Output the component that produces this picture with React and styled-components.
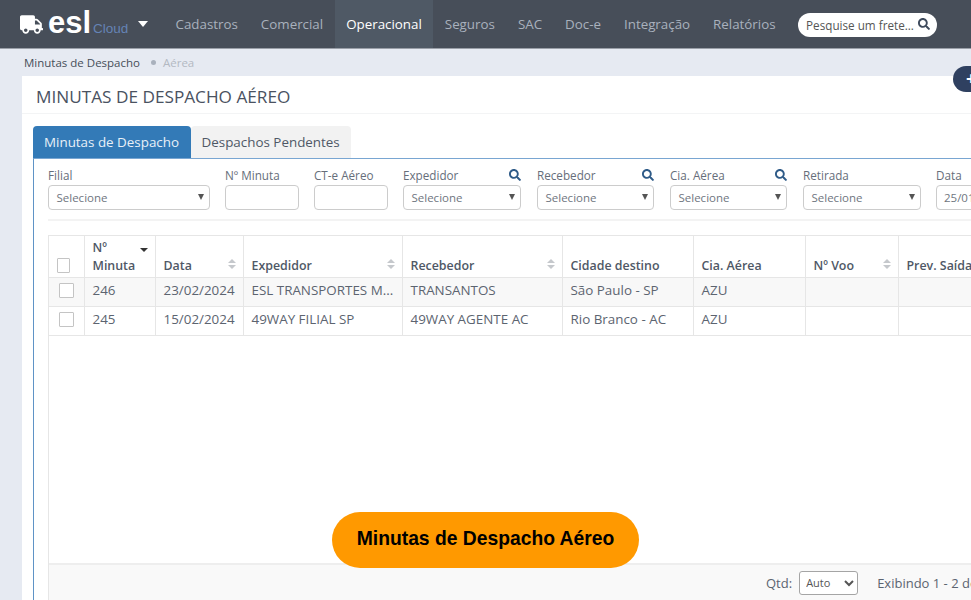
import styled, { createGlobalStyle } from "styled-components";
import { FaTruck, FaSearch } from "react-icons/fa";

const GlobalStyle = createGlobalStyle`
  html, body {
    margin: 0;
    height: 100%;
    overflow: hidden;
    background: #e6eaf2;
    font-family: "Open Sans", sans-serif;
    color: #555;
  }
  * { box-sizing: border-box; }
`;

const Page = styled.div`
  position: relative;
  width: 971px;
  height: 600px;
  overflow: hidden;
  display: flex;
  flex-direction: column;
`;

const TopBar = styled.header`
  flex: none;
  height: 49px;
  display: flex;
  align-items: stretch;
  background: #474e59;
  border-bottom: 1px solid #9a9fa8;
`;

const Logo = styled.div`
  width: 164px;
  padding-left: 20px;
  display: flex;
  align-items: center;
  color: #fff;
  font-family: "Liberation Sans", sans-serif;
`;

const LogoWord = styled.span`
  margin-left: 5px;
  font-size: 31px;
  font-weight: 700;
  line-height: 32px;
  position: relative;
  top: -1px;
`;

const LogoCloud = styled.span`
  margin-left: 2px;
  margin-top: 9px;
  font-size: 13.5px;
  color: #6583b5;
`;

const LogoCaret = styled.span`
  margin-left: 10px;
  border-left: 5.5px solid transparent;
  border-right: 5.5px solid transparent;
  border-top: 6px solid #fff;
`;

const NavItem = styled.a`
  display: flex;
  align-items: center;
  padding: 0 11.5px;
  font-size: 13.35px;
  color: ${(p) => (p.$active ? "#fff" : "#a9b1bd")};
  background: ${(p) => (p.$active ? "#4f5965" : "transparent")};
`;

const SearchBox = styled.div`
  margin: 13px 0 0 11px;
  width: 139px;
  height: 24px;
  padding: 0 7px 0 8px;
  display: flex;
  align-items: center;
  justify-content: space-between;
  background: #fff;
  border-radius: 12px;
  font-size: 11.7px;
  color: #555;
  white-space: nowrap;
  svg {
    flex: none;
    color: #3e4a5c;
    font-size: 12px;
    margin-top: -2px;
  }
`;

const Breadcrumb = styled.div`
  flex: none;
  height: 27px;
  padding: 0 0 1px 24px;
  display: flex;
  align-items: center;
  font-size: 11.5px;
  color: #474e59;
`;

const CrumbDot = styled.span`
  width: 5px;
  height: 5px;
  margin: 0 7px 0 11px;
  border-radius: 50%;
  background: #a9b1bd;
`;

const CrumbCurrent = styled.span`
  color: #b3b9c2;
`;

const Panel = styled.main`
  flex: 1;
  margin-left: 22px;
  width: 949px;
  background: #fff;
  display: flex;
  flex-direction: column;
  min-height: 0;
`;

const PanelTitle = styled.h1`
  flex: none;
  height: 38px;
  margin: 0;
  padding: 3px 14px 0;
  display: flex;
  align-items: center;
  font-size: 17.2px;
  font-weight: 400;
  color: #4a5261;
  border-bottom: 1px solid #f3f4f5;
`;

const FloatButton = styled.div`
  position: absolute;
  left: 953px;
  top: 66px;
  width: 40px;
  height: 26px;
  border-radius: 13px;
  background: #2f4060;
  color: #fff;
  font-size: 18px;
  font-weight: 700;
  line-height: 25px;
  padding-left: 13px;
`;

const Tabs = styled.nav`
  flex: none;
  display: flex;
  margin: 12px 0 0 11px;
  height: 32px;
`;

const Tab = styled.a`
  display: flex;
  align-items: center;
  height: 32px;
  padding: 0 11.5px 1px 11px;
  font-size: 13.4px;
  border-radius: 4px 4px 0 0;
  color: ${(p) => (p.$active ? "#e8f0f8" : "#4f5866")};
  background: ${(p) => (p.$active ? "#337ab7" : "#f2f2f2")};
`;

const TabBody = styled.section`
  flex: 1;
  margin-left: 11px;
  min-height: 0;
  padding: 8px 0 0 14px;
  display: flex;
  flex-direction: column;
  border-left: 1px solid #5f93c6;
  border-top: 1px solid #79a6d2;
`;

const Filters = styled.div`
  flex: none;
  width: 960px;
  display: flex;
  height: 54px;
  border-bottom: 2px solid #f3f3f3;
`;

const Field = styled.div`
  flex: none;
  width: ${(p) => p.$width}px;
  margin-right: ${(p) => p.$gap ?? 15}px;
`;

const FieldLabel = styled.div`
  height: 18px;
  padding-bottom: 2px;
  display: flex;
  align-items: center;
  justify-content: space-between;
  font-size: 11.7px;
  color: #666e7a;
  svg {
    color: #2f5b88;
    font-size: 12px;
    margin-top: -1px;
  }
`;

const SelectBox = styled.div`
  height: 25px;
  padding: 0 8px 1px 7.5px;
  display: flex;
  align-items: center;
  justify-content: space-between;
  border: 1px solid #ccc;
  border-radius: 4px;
  font-size: 11.5px;
  color: #6f7680;
`;

const SelectCaret = styled.span`
  border-left: 3px solid transparent;
  border-right: 3px solid transparent;
  border-top: 6px solid #555;
  margin-right: -3px;
`;

const TextBox = styled.div`
  height: 25px;
  padding: 0 7px 1px;
  display: flex;
  align-items: center;
  border: 1px solid #ccc;
  border-radius: 4px;
  font-size: 11.5px;
  color: #6f7680;
  white-space: nowrap;
  overflow: hidden;
`;

const GridFrame = styled.div`
  flex: 1;
  width: 1000px;
  margin-top: 14px;
  min-height: 0;
  display: flex;
  flex-direction: column;
  border: 1px solid #e6e6e6;
  border-bottom: 0;
`;

const Table = styled.table`
  flex: none;
  table-layout: fixed;
  width: 1000px;
  border-collapse: collapse;
  font-size: 13.4px;
`;

const Th = styled.th`
  position: relative;
  height: 41px;
  padding: 0 8px 2px 8px;
  vertical-align: bottom;
  text-align: left;
  font-size: 12.4px;
  font-weight: 600;
  line-height: 18px;
  color: #4f5866;
  border: 1px solid #e6e6e6;
  border-top: 0;
  &:first-child { border-left: 0; padding-bottom: 4px; }
`;

const Td = styled.td`
  height: ${(p) => p.$h}px;
  padding: 0 2px 3px 8px;
  color: #5c6470;
  white-space: nowrap;
  overflow: hidden;
  text-overflow: ellipsis;
  background: ${(p) => (p.$odd ? "#f8f8f8" : "#fff")};
  border: 1px solid #e6e6e6;
  &:first-child { border-left: 0; }
`;

const CheckCell = styled.div`
  display: flex;
  justify-content: center;
  padding-right: 6px;
`;

const Check = styled.span`
  display: block;
  width: 15px;
  height: 15px;
  background: #fff;
  border: 1px solid #c4c4c4;
  border-radius: 1px;
`;

const SortIcon = styled.span`
  position: absolute;
  right: 7px;
  bottom: 8px;
  width: 8px;
  height: 10px;
  display: flex;
  flex-direction: column;
  justify-content: space-between;
  &::before, &::after {
    content: "";
    border-left: 4px solid transparent;
    border-right: 4px solid transparent;
  }
  &::before { border-bottom: 4px solid #c5c8cc; }
  &::after { border-top: 4px solid #c5c8cc; }
`;

const SortActive = styled.span`
  position: absolute;
  right: 7px;
  top: 12px;
  border-left: 4px solid transparent;
  border-right: 4px solid transparent;
  border-top: 4px solid #333;
`;

const GridSpacer = styled.div`
  flex: 1;
`;

const GridFooter = styled.footer`
  flex: none;
  height: 37px;
  padding-left: 717px;
  display: flex;
  align-items: center;
  background: #f9f9f9;
  border-top: 2px solid #eeeeee;
  font-size: 13px;
  color: #5c6470;
  white-space: nowrap;
`;

const QtdSelect = styled.select`
  width: 59px;
  height: 24px;
  margin: 0 19px 0 7px;
  padding: 0 0 0 2px;
  font-family: "Open Sans", sans-serif;
  font-size: 11px;
  color: #555;
  background: #fff;
  border: 1px solid #a5a5a5;
  border-radius: 3px;
`;

const Caption = styled.div`
  position: absolute;
  left: 332px;
  top: 512px;
  width: 307px;
  height: 56px;
  padding-bottom: 2px;
  display: flex;
  align-items: center;
  justify-content: center;
  background: #ff9900;
  border-radius: 28px;
  font-family: "Liberation Sans", sans-serif;
  font-size: 19.3px;
  font-weight: 700;
  color: #000;
`;

const navItems = ["Cadastros", "Comercial", "Operacional", "Seguros", "SAC", "Doc-e", "Integração", "Relatórios"];

const columns = [
  { width: 35 },
  { width: 71, title: "Nº Minuta", active: true },
  { width: 88, title: "Data", sort: true },
  { width: 159, title: "Expedidor", sort: true },
  { width: 160, title: "Recebedor", sort: true },
  { width: 131, title: "Cidade destino" },
  { width: 112, title: "Cia. Aérea" },
  { width: 93, title: "Nº Voo", sort: true },
  { width: 151, title: "Prev. Saída" },
];

const rows = [
  ["246", "23/02/2024", "ESL TRANSPORTES M...", "TRANSANTOS", "São Paulo - SP", "AZU", "", ""],
  ["245", "15/02/2024", "49WAY FILIAL SP", "49WAY AGENTE AC", "Rio Branco - AC", "AZU", "", ""],
];

const FilterSelect = ({ label, width, gap, search }) => (
  <Field $width={width} $gap={gap}>
    <FieldLabel>
      {label}
      {search && <FaSearch />}
    </FieldLabel>
    <SelectBox>
      Selecione
      <SelectCaret />
    </SelectBox>
  </Field>
);

const App = () => (
  <Page>
    <GlobalStyle />
    <TopBar>
      <Logo>
        <FaTruck size={23} />
        <LogoWord>esl</LogoWord>
        <LogoCloud>Cloud</LogoCloud>
        <LogoCaret />
      </Logo>
      {navItems.map((item) => (
        <NavItem key={item} $active={item === "Operacional"}>
          {item}
        </NavItem>
      ))}
      <SearchBox>
        Pesquise um frete...
        <FaSearch />
      </SearchBox>
    </TopBar>

    <Breadcrumb>
      Minutas de Despacho
      <CrumbDot />
      <CrumbCurrent>Aérea</CrumbCurrent>
    </Breadcrumb>

    <Panel>
      <PanelTitle>MINUTAS DE DESPACHO AÉREO</PanelTitle>
      <Tabs>
        <Tab $active>Minutas de Despacho</Tab>
        <Tab>Despachos Pendentes</Tab>
      </Tabs>
      <TabBody>
        <Filters>
          <FilterSelect label="Filial" width={162} />
          <Field $width={74}>
            <FieldLabel>Nº Minuta</FieldLabel>
            <TextBox />
          </Field>
          <Field $width={74}>
            <FieldLabel>CT-e Aéreo</FieldLabel>
            <TextBox />
          </Field>
          <FilterSelect label="Expedidor" width={118} gap={16} search />
          <FilterSelect label="Recebedor" width={117} gap={16} search />
          <FilterSelect label="Cia. Aérea" width={117} gap={16} search />
          <FilterSelect label="Retirada" width={118} />
          <Field $width={90}>
            <FieldLabel>Data</FieldLabel>
            <TextBox>25/01/2024</TextBox>
          </Field>
        </Filters>

        <GridFrame>
          <Table>
            <colgroup>
              {columns.map((col, i) => (
                <col key={i} style={{ width: col.width }} />
              ))}
            </colgroup>
            <thead>
              <tr>
                {columns.map((col, i) => (
                  <Th key={i}>
                    {col.title || (
                      <CheckCell>
                        <Check />
                      </CheckCell>
                    )}
                    {col.sort && <SortIcon />}
                    {col.active && <SortActive />}
                  </Th>
                ))}
              </tr>
            </thead>
            <tbody>
              {rows.map((row, r) => (
                <tr key={row[0]}>
                  <Td $odd={r === 0} $h={29}>
                    <CheckCell>
                      <Check />
                    </CheckCell>
                  </Td>
                  {row.map((cell, c) => (
                    <Td key={c} $odd={r === 0} $h={29}>
                      {cell}
                    </Td>
                  ))}
                </tr>
              ))}
            </tbody>
          </Table>
          <GridSpacer />
          <GridFooter>
            Qtd:
            <QtdSelect defaultValue="Auto">
              <option>Auto</option>
            </QtdSelect>
            Exibindo 1 - 2 de 2
          </GridFooter>
        </GridFrame>
      </TabBody>
    </Panel>

    <FloatButton>+</FloatButton>
    <Caption>Minutas de Despacho Aéreo</Caption>
  </Page>
);

export default App;
